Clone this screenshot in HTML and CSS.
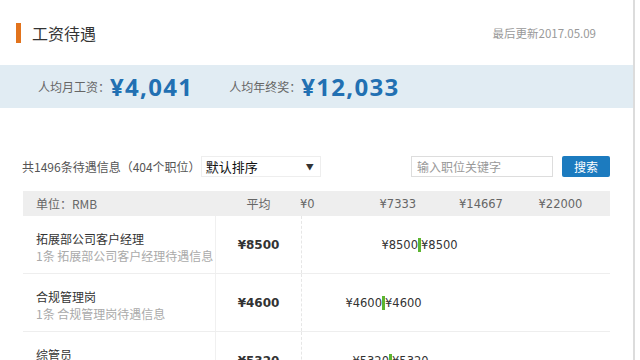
FILE: index.html
```html
<!DOCTYPE html>
<html lang="zh-CN">

<head>
    <meta charset="UTF-8">
    <meta name="viewport" content="width=device-width, initial-scale=1.0">
    <title>工资待遇</title>
    <link rel="stylesheet" href="styles.css">
</head>

<body>
    <div class="page">
        <div class="sec-head">
            <h2 class="sec-title">工资待遇</h2>
            <span class="update">最后更新2017.05.09</span>
        </div>

        <div class="summary">
            <span class="sum-label">人均月工资：</span>
            <span class="sum-value">¥4,041</span>
            <span class="sum-label">人均年终奖：</span>
            <span class="sum-value">¥12,033</span>
        </div>

        <div class="toolbar">
            <span class="total">共1496条待遇信息（404个职位）</span>
            <div class="sort-select">
                <span>默认排序</span>
                <span class="arrow">▼</span>
            </div>
            <div class="search">
                <input type="text" placeholder="输入职位关键字">
                <button>搜索</button>
            </div>
        </div>

        <div class="salary-table">
            <div class="thead">
                <div class="col-name">单位：RMB</div>
                <div class="col-avg">平均</div>
                <div class="col-scale">
                    <span>¥0</span>
                    <span>¥7333</span>
                    <span>¥14667</span>
                    <span>¥22000</span>
                </div>
            </div>

            <div class="row">
                <div class="col-name">
                    <div class="job">拓展部公司客户经理</div>
                    <div class="job-sub">1条 拓展部公司客户经理待遇信息</div>
                </div>
                <div class="col-avg avg-value">¥8500</div>
                <div class="col-range">
                    <div class="range" style="grid-template-columns: 116px 3px auto;">
                        <span class="range-low">¥8500</span>
                        <span class="range-bar"></span>
                        <span class="range-high">¥8500</span>
                    </div>
                </div>
            </div>

            <div class="row">
                <div class="col-name">
                    <div class="job">合规管理岗</div>
                    <div class="job-sub">1条 合规管理岗待遇信息</div>
                </div>
                <div class="col-avg avg-value">¥4600</div>
                <div class="col-range">
                    <div class="range" style="grid-template-columns: 80px 3px auto;">
                        <span class="range-low">¥4600</span>
                        <span class="range-bar"></span>
                        <span class="range-high">¥4600</span>
                    </div>
                </div>
            </div>

            <div class="row">
                <div class="col-name">
                    <div class="job">综管员</div>
                    <div class="job-sub">1条 综管员待遇信息</div>
                </div>
                <div class="col-avg avg-value">¥5320</div>
                <div class="col-range">
                    <div class="range" style="grid-template-columns: 87px 3px auto;">
                        <span class="range-low">¥5320</span>
                        <span class="range-bar"></span>
                        <span class="range-high">¥5320</span>
                    </div>
                </div>
            </div>
        </div>
    </div>
</body>

</html>
```

FILE: styles.css
```css
* {
    box-sizing: border-box;
}

body {
    margin: 0;
    background: #fff;
    font-family: "Noto Sans CJK SC", "Liberation Sans", sans-serif;
    color: #333;
    font-size: 12px;
}

.page {
    width: 635px;
    min-height: 360px;
    border-right: 2px solid #dcdcdc;
    overflow: hidden;
}

/* tieu de */
.sec-head {
    height: 65px;
    display: flex;
    align-items: center;
    justify-content: space-between;
    padding: 0 37px 0 16px;
}

.sec-title {
    margin: 0;
    font-size: 16px;
    font-weight: normal;
    color: #333;
    border-left: 5px solid #e2731c;
    padding-left: 11px;
    line-height: 20px;
}

.update {
    font-size: 11.5px;
    color: #999;
}

/* tong quan */
.summary {
    height: 43px;
    background: #e1ecf3;
    display: flex;
    align-items: center;
    padding-left: 38px;
}

.sum-label {
    color: #666;
    font-size: 12px;
}

.sum-value {
    font-family: "Open Sans", "Noto Sans CJK SC", sans-serif;
    font-weight: bold;
    font-size: 24px;
    color: #2270b2;
    margin-right: 36px;
    letter-spacing: 1.3px;
}

/* thanh cong cu */
.toolbar {
    display: flex;
    align-items: center;
    padding: 48px 23px 14px 22px;
}

.total {
    color: #555;
    font-size: 12px;
}

.sort-select {
    width: 120px;
    height: 21px;
    display: flex;
    align-items: center;
    justify-content: space-between;
    padding: 0 6px 0 4px;
    border: 1px solid #eee;
    font-size: 13px;
    color: #111;
}

.sort-select .arrow {
    font-size: 8px;
    color: #333;
}

.search {
    margin-left: auto;
    display: flex;
    gap: 9px;
}

.search input {
    width: 142px;
    height: 21px;
    border: 1px solid #ddd;
    padding: 0 5px;
    font-family: inherit;
    font-size: 12px;
}

.search input::placeholder {
    color: #999;
}

.search button {
    width: 48px;
    height: 21px;
    border: none;
    border-radius: 2px;
    background: #1c7bbf;
    color: #fff;
    font-family: inherit;
    font-size: 12px;
    padding: 0;
}

/* bang luong */
.salary-table {
    margin: 0 23px;
}

.thead,
.row {
    display: grid;
    grid-template-columns: 192px 87px 1fr;
}

.thead {
    height: 25px;
    background: #eee;
    align-items: center;
    color: #666;
    font-size: 12px;
}

.thead .col-name {
    padding-left: 13px;
}

.thead .col-avg {
    text-align: center;
}

.col-scale {
    display: flex;
    margin-left: -2px;
    font-family: "DejaVu Sans", sans-serif;
    font-size: 11.5px;
}

.col-scale span {
    width: 79.5px;
}

.row {
    height: 58px;
    border-bottom: 1px solid #eee;
}

.row .col-name {
    padding: 14px 0 0 13px;
}

.job {
    font-size: 12px;
    color: #333;
    line-height: 17px;
}

.job-sub {
    font-size: 12px;
    color: #aaa;
    line-height: 17px;
}

.avg-value {
    display: flex;
    align-items: center;
    justify-content: center;
    border-left: 1px solid #f0f0f0;
    border-right: 1px dashed #e6e6e6;
    font-family: "DejaVu Sans", sans-serif;
    font-weight: bold;
    font-size: 12px;
    color: #333;
    padding-top: 1px;
}

.col-range {
    display: flex;
    align-items: center;
}

.range {
    display: grid;
    align-items: center;
    font-family: "DejaVu Sans", sans-serif;
    font-size: 11.5px;
    color: #333;
}

.range-low {
    justify-self: end;
}

.range-bar {
    width: 3px;
    height: 14px;
    background: #5cb531;
}
```
